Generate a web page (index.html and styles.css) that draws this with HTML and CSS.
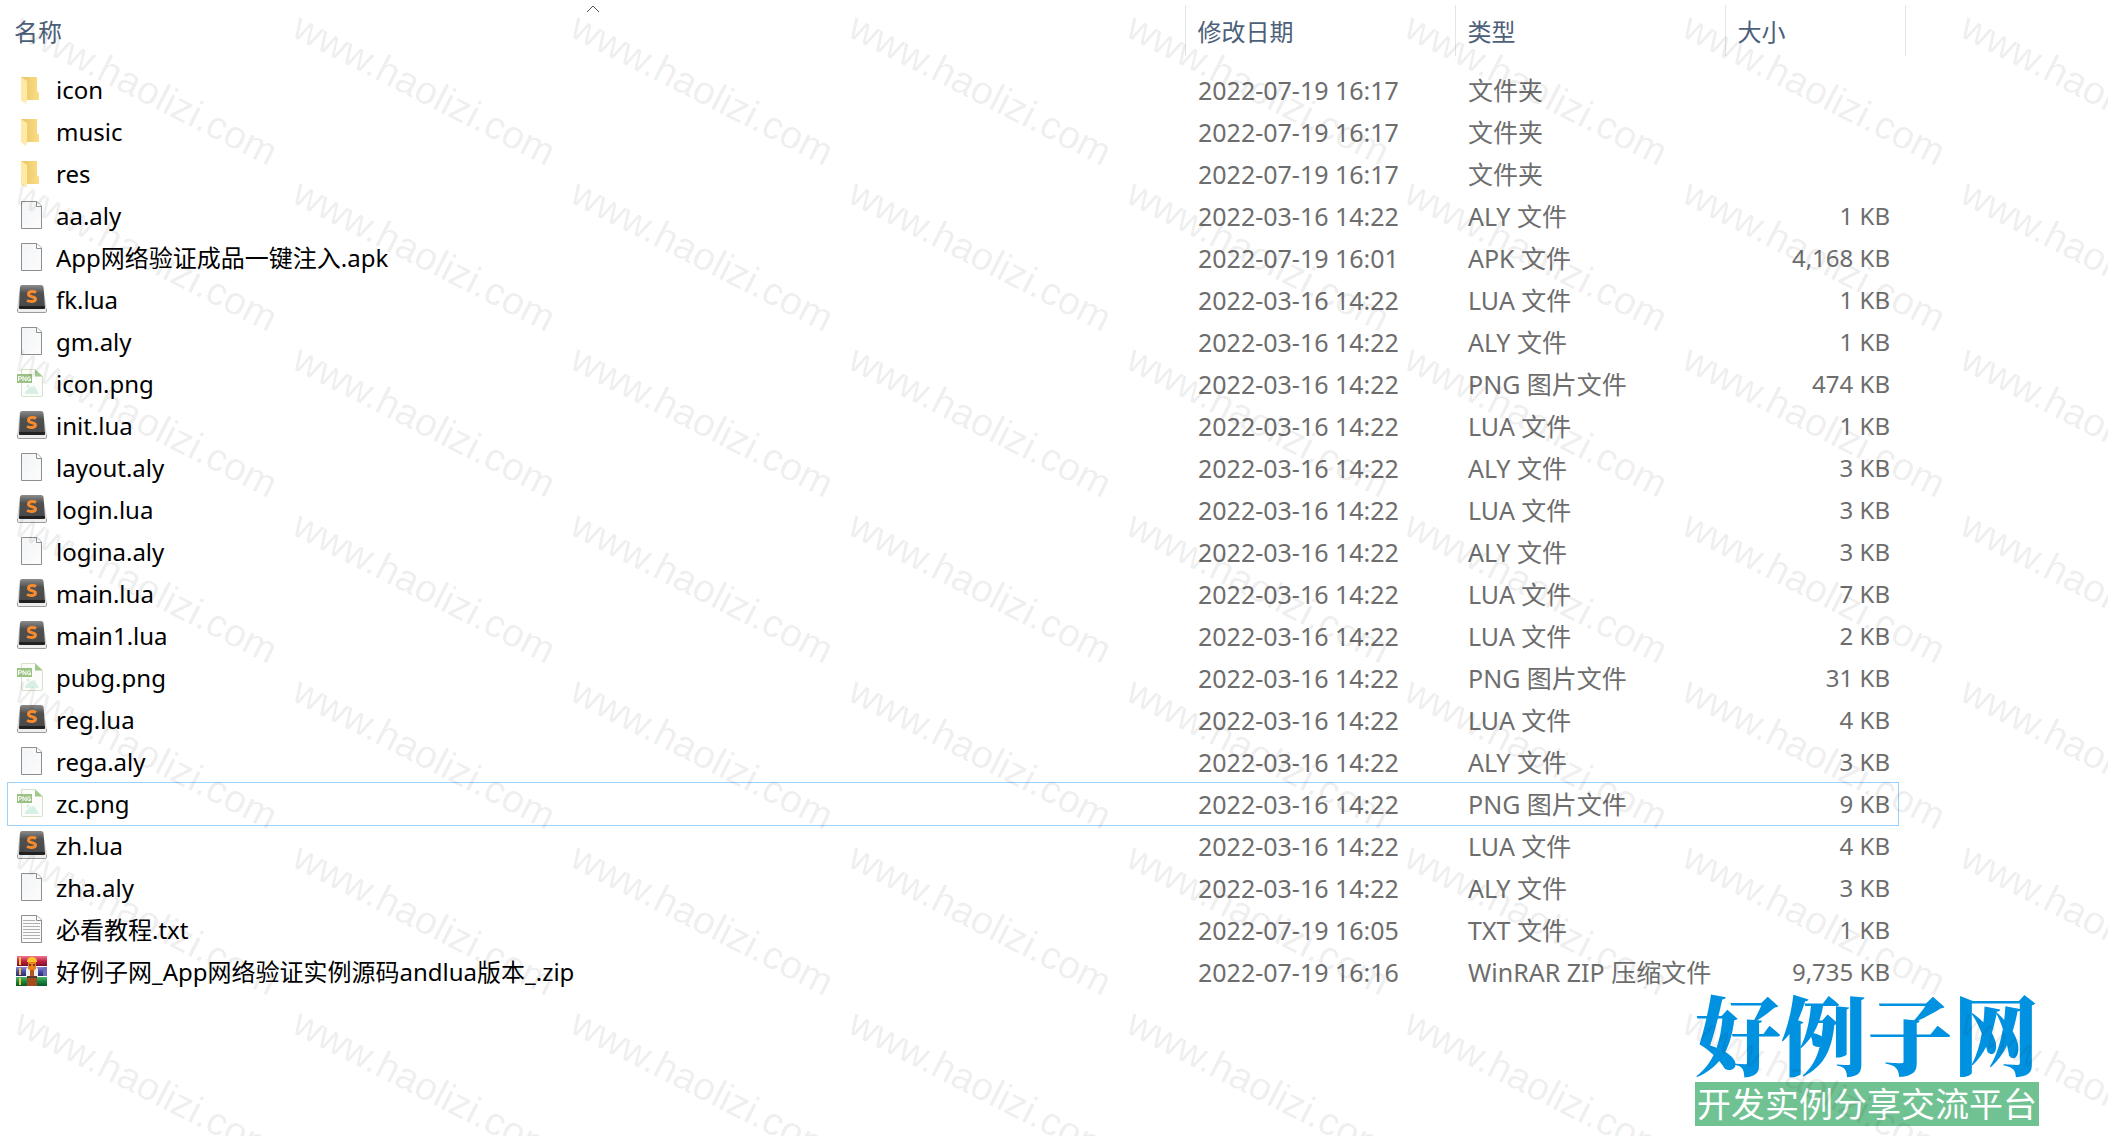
FILE: index.html
```
<!DOCTYPE html>
<html lang="zh-CN">
<head>
  <meta charset="UTF-8">
  <meta name="viewport" content="width=device-width, initial-scale=1.0">
  <title>文件列表</title>
  <link rel="stylesheet" href="styles.css">
</head>
<body>
  <!-- 图标 -->
  <svg class="symbols" width="0" height="0">
    <defs>
      <linearGradient id="g_folder" x1="0" x2="1">
        <stop offset="0" stop-color="#e8c566"/>
        <stop offset="1" stop-color="#fbdd84"/>
      </linearGradient>
      <linearGradient id="g_file" x1="0" y1="0" x2="1" y2="1">
        <stop offset="0" stop-color="#f2f4f5"/>
        <stop offset="1" stop-color="#fcfcfd"/>
      </linearGradient>
      <linearGradient id="g_key" x1="0" y1="0" x2="0" y2="1">
        <stop offset="0" stop-color="#8c8c8c"/>
        <stop offset=".35" stop-color="#505050"/>
        <stop offset="1" stop-color="#484848"/>
      </linearGradient>
      <linearGradient id="g_red" x1="0" y1="0" x2="0" y2="1">
        <stop offset="0" stop-color="#f07a90"/>
        <stop offset=".5" stop-color="#c41f45"/>
        <stop offset="1" stop-color="#7c0f28"/>
      </linearGradient>
      <linearGradient id="g_blue" x1="0" y1="0" x2="0" y2="1">
        <stop offset="0" stop-color="#8a8ad6"/>
        <stop offset=".5" stop-color="#4a4ba8"/>
        <stop offset="1" stop-color="#2b2c6c"/>
      </linearGradient>
      <linearGradient id="g_green" x1="0" y1="0" x2="0" y2="1">
        <stop offset="0" stop-color="#4fb36c"/>
        <stop offset=".5" stop-color="#178840"/>
        <stop offset="1" stop-color="#0a5527"/>
      </linearGradient>
    </defs>
    <symbol id="folder" viewBox="0 0 32 32">
      <path d="M5 3H21V17L23 19V26H9Z" fill="url(#g_folder)"/>
      <path d="M5 3L11 7V26L10 30L5 26Z" fill="#ffe9a6"/>
    </symbol>
    <symbol id="file" viewBox="0 0 32 32">
      <path d="M5.500 1.500H21L25.500 6V28.500H5.500Z" fill="url(#g_file)" stroke="#8c8f91"/>
      <path d="M20.500 1.500V6.500H25.500" fill="#fff" stroke="#8c8f91"/>
    </symbol>
    <symbol id="txt" viewBox="0 0 32 32">
      <path d="M5.500 1.500H21L25.500 6V28.500H5.500Z" fill="#fbfbfb" stroke="#8c8f91"/>
      <path d="M20.500 1.500V6.500H25.500" fill="#fff" stroke="#8c8f91"/>
      <path d="M7 6.500H19M7 9.500H24M7 12.500H24M7 15.500H24M7 18.500H24M7 21.500H24M7 24.500H24" stroke="#aeb0b1" fill="none"/>
    </symbol>
    <symbol id="lua" viewBox="0 0 32 32">
      <path d="M4 2H27L31 25V27Q31 29 29 29H3Q1 29 1 27V25Z" fill="#d6d6d6"/>
      <path d="M1.500 25V27.500Q2 28.500 3 28.500H29Q30 28.500 30.500 27.500V25" fill="#eee" stroke="#9b9b9b"/>
      <path d="M6 1H25Q27 1 27.500 3L29 24H3L4 3Q4.500 1 6 1Z" fill="url(#g_key)"/>
      <path d="M3 22H29V24Q29 25 28 25H4Q3 25 3 24Z" fill="#222"/>
      <path d="M20 8.500C18 7 12.500 7 12.500 10.200C12.500 13.500 19.500 12 19.500 15C19.500 18 14 18 11 16.500" fill="none" stroke="#f68a2c" stroke-width="3"/>
    </symbol>
    <symbol id="png" viewBox="0 0 32 32">
      <path d="M5.500 1.500H19L26.500 8V27Q26.500 28.500 25 28.500H7Q5.500 28.500 5.500 27Z" fill="#fcfdfb" stroke="#d4e4c9"/>
      <path d="M19 1.500L26.500 8.500H19Z" fill="#9fc88a"/>
      <path d="M9 26Q9 22 12 21.500Q13 18 16 19Q17 17 19 19L23 26Z" fill="#d8efe4"/>
      <circle cx="12" cy="18" r="1.500" fill="#d8efe4"/>
      <path d="M1 6H16V15H1Z" fill="#9cc184"/>
      <path d="M2.500 13V8.500H4.500Q5.500 8.500 5.500 10Q5.500 11 4 11H2.500M7 13V8.500L10 13V8.500M14.500 9Q11.500 8 11.500 10.800Q11.500 13.500 14.500 12.500V11H13" fill="none" stroke="#fff"/>
    </symbol>
    <symbol id="zip" viewBox="0 0 32 32">
      <path d="M1 0H31V10H1Z" fill="url(#g_red)"/>
      <path d="M0 11H31V20H0Z" fill="url(#g_blue)"/>
      <path d="M0 21H31V30H0Z" fill="url(#g_green)"/>
      <path d="M3 1H5V9H3ZM3 12H5V19H3ZM3 22H5V29H3Z" fill="#f3c53b"/>
      <path d="M27 11H31V20H27Z" fill="#6c6dbd"/>
      <path d="M11 21H21V30H11Z" fill="#a34c1e"/>
      <path d="M11 20H21V22H11Z" fill="#5a3a2a"/>
      <path d="M10 13L12 11H20L22 13V20H10Z" fill="#efefef"/>
      <path d="M12 5H20V13Q16 17 12 13Z" fill="#e98322"/>
      <path d="M11 6Q11 1 16 1Q21 1 21 6Z" fill="#f9c52f"/>
      <path d="M14 14H18V20H14Z" fill="#b4581d"/>
      <path d="M13 8H15V10H13ZM17 8H19V10H17Z" fill="#7c3d12"/>
    </symbol>
  </svg>

  <div class="explorer">
    <table class="file_list">
      <colgroup>
        <col class="col_name">
        <col class="col_date">
        <col class="col_type">
        <col class="col_size">
      </colgroup>
      <thead>
        <tr>
          <th>
            名称
            <svg class="sort" viewBox="0 0 14 8"><path d="M1 7L7 1L13 7" fill="none" stroke="#555"/></svg>
          </th>
          <th>修改日期</th>
          <th>类型</th>
          <th>大小</th>
        </tr>
      </thead>
      <tbody></tbody>
    </table>
  </div>

  <div class="logo">
    <div class="logo_name">好例子网</div>
    <div class="logo_text">开发实例分享交流平台</div>
  </div>

  <!-- 水印 -->
  <div class="watermark"></div>

  <script src="main.js"></script>
</body>
</html>
```
FILE: main.js
```
var tbody = document.getElementsByTagName('tbody')[0];
var watermark = document.getElementsByClassName('watermark')[0];

// 图标, 名称, 修改日期, 类型, 大小
var files = [
  ['folder', 'icon', '2022-07-19 16:17', '文件夹', ''],
  ['folder', 'music', '2022-07-19 16:17', '文件夹', ''],
  ['folder', 'res', '2022-07-19 16:17', '文件夹', ''],
  ['file', 'aa.aly', '2022-03-16 14:22', 'ALY 文件', '1 KB'],
  ['file', 'App网络验证成品一键注入.apk', '2022-07-19 16:01', 'APK 文件', '4,168 KB'],
  ['lua', 'fk.lua', '2022-03-16 14:22', 'LUA 文件', '1 KB'],
  ['file', 'gm.aly', '2022-03-16 14:22', 'ALY 文件', '1 KB'],
  ['png', 'icon.png', '2022-03-16 14:22', 'PNG 图片文件', '474 KB'],
  ['lua', 'init.lua', '2022-03-16 14:22', 'LUA 文件', '1 KB'],
  ['file', 'layout.aly', '2022-03-16 14:22', 'ALY 文件', '3 KB'],
  ['lua', 'login.lua', '2022-03-16 14:22', 'LUA 文件', '3 KB'],
  ['file', 'logina.aly', '2022-03-16 14:22', 'ALY 文件', '3 KB'],
  ['lua', 'main.lua', '2022-03-16 14:22', 'LUA 文件', '7 KB'],
  ['lua', 'main1.lua', '2022-03-16 14:22', 'LUA 文件', '2 KB'],
  ['png', 'pubg.png', '2022-03-16 14:22', 'PNG 图片文件', '31 KB'],
  ['lua', 'reg.lua', '2022-03-16 14:22', 'LUA 文件', '4 KB'],
  ['file', 'rega.aly', '2022-03-16 14:22', 'ALY 文件', '3 KB'],
  ['png', 'zc.png', '2022-03-16 14:22', 'PNG 图片文件', '9 KB'],
  ['lua', 'zh.lua', '2022-03-16 14:22', 'LUA 文件', '4 KB'],
  ['file', 'zha.aly', '2022-03-16 14:22', 'ALY 文件', '3 KB'],
  ['txt', '必看教程.txt', '2022-07-19 16:05', 'TXT 文件', '1 KB'],
  ['zip', '好例子网_App网络验证实例源码andlua版本_.zip', '2022-07-19 16:16', 'WinRAR ZIP 压缩文件', '9,735 KB']
];

// 文件列表
var html = '';
for (var i = 0; i < files.length; i++) {
  var f = files[i];
  html += '<tr' + (f[1] === 'zc.png' ? ' class="focus"' : '') + '>' +
    '<td><div class="name"><svg class="icon"><use href="#' + f[0] + '"></use></svg>' + f[1] + '</div></td>' +
    '<td class="info">' + f[2] + '</td>' +
    '<td class="info">' + f[3] + '</td>' +
    '<td>' + f[4] + '</td></tr>';
}
tbody.innerHTML = html;

// 水印铺满窗口
var cols = Math.ceil(window.innerWidth / 278);
var rows = Math.ceil(window.innerHeight / 166);
var marks = '';
for (var j = 0; j < cols * rows; j++) {
  marks += '<span>www.haolizi.com</span>';
}
watermark.style.gridTemplateColumns = 'repeat(' + cols + ', 278px)';
watermark.innerHTML = marks;
```
FILE: styles.css
```
* {
  margin: 0;
  padding: 0;
  box-sizing: border-box;
}
body {
  position: relative;
  min-height: 100vh;
  background-color: #fff;
  font-family: "Noto Sans", "Noto Sans CJK SC", sans-serif;
  font-size: 24px;
  color: #6d6d6d;
  overflow: hidden;
}
.symbols {
  position: absolute;
}
.explorer {
  padding: 5px 210px 0 8px;
}
.file_list {
  width: 100%;
  table-layout: fixed;
  border-collapse: collapse;
}
.col_date,
.col_type {
  width: 270px;
}
.col_size {
  width: 173px;
}
th {
  position: relative;
  height: 51px;
  padding-left: 12px;
  border-left: 1px solid #e5e5e5;
  font-weight: normal;
  text-align: left;
  color: #4c607a;
}
th:first-child {
  padding-left: 6px;
  border-left: none;
}
th:last-child::after {
  content: "";
  position: absolute;
  top: 0;
  right: -8px;
  height: 100%;
  border-right: 1px solid #e5e5e5;
}
.sort {
  position: absolute;
  left: 50%;
  top: 0;
  width: 14px;
  height: 8px;
  margin-left: -10px;
}
tbody::before {
  content: "";
  display: block;
  height: 13px;
}
td {
  height: 42px;
  padding-left: 13px;
  line-height: 40px;
  white-space: nowrap;
}
td:first-child {
  padding-left: 8px;
  color: #000;
}
td:last-child {
  padding-right: 8px;
  text-align: right;
}
.info {
  font-size: 25px;
}
.focus {
  outline: 1px solid #99d1ff;
}
.name {
  display: flex;
  align-items: center;
}
.icon {
  width: 32px;
  height: 32px;
  margin-right: 8px;
}
.logo {
  position: absolute;
  right: 69px;
  bottom: 10px;
  width: 344px;
  white-space: nowrap;
}
.logo_name {
  height: 90px;
  line-height: 80px;
  font-family: "Noto Serif CJK SC", "Noto Sans CJK SC", serif;
  font-size: 86px;
  font-weight: 900;
  color: #0092e0;
}
.logo_text {
  height: 44px;
  padding-left: 2px;
  line-height: 44px;
  background-color: #71c293;
  font-size: 34px;
  color: #fff;
}
.watermark {
  position: absolute;
  top: 0;
  left: 0;
  width: 100%;
  height: 100%;
  display: grid;
  grid-auto-rows: 166px;
  overflow: hidden;
  pointer-events: none;
  font-family: "Liberation Sans", Arial, sans-serif;
  font-size: 39px;
  color: rgba(0, 0, 0, .08);
}
.watermark span {
  padding: 8px 0 0 26px;
  line-height: 36px;
  white-space: nowrap;
  transform: rotate(27deg);
  transform-origin: 26px 8px;
}
```
